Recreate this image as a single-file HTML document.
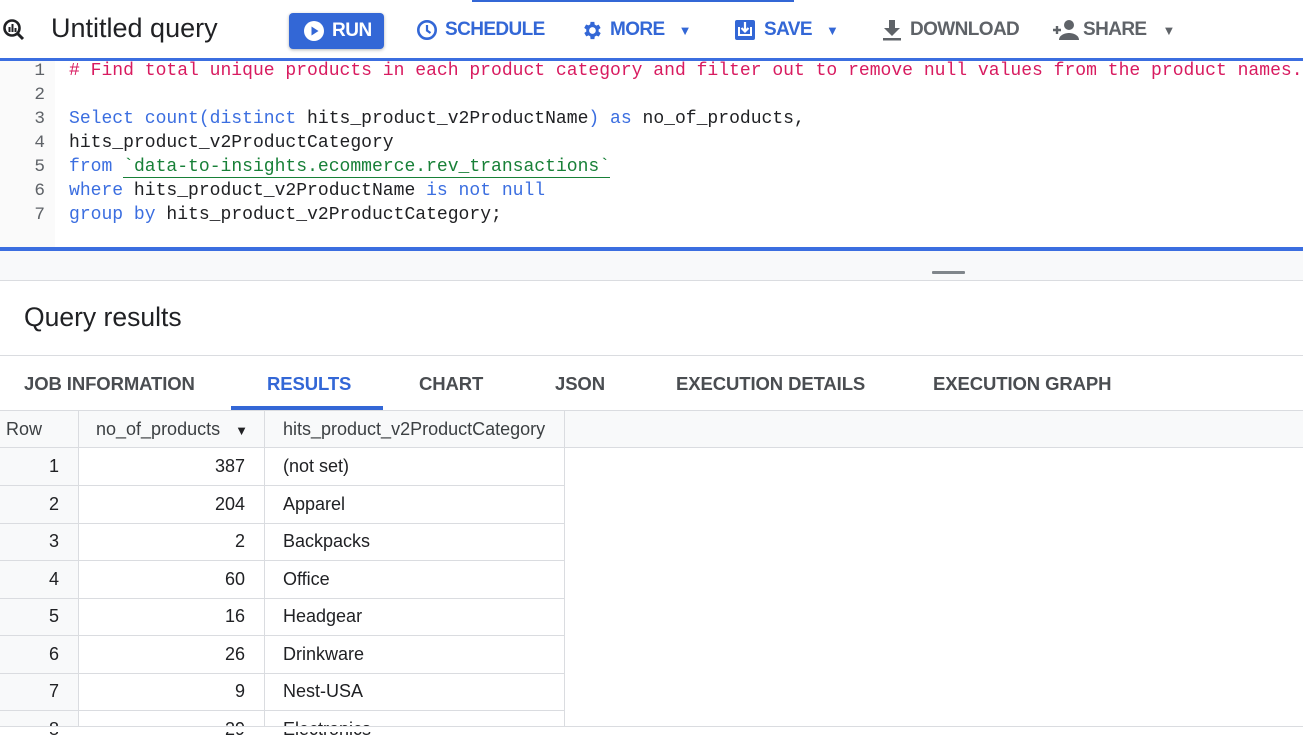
<!DOCTYPE html>
<html><head><style>
*{margin:0;padding:0;box-sizing:border-box}
body{width:1303px;height:732px;overflow:hidden;background:#fff;font-family:"Liberation Sans",Arial,sans-serif;position:relative;color:#202124}
.abs{position:absolute}
.tb{position:absolute;top:17px;height:26px;display:flex;align-items:center;font-size:19px;font-weight:bold;letter-spacing:-0.6px}
.blue{color:#3367d6}.gray{color:#5f6368}
.code{position:absolute;left:69px;font-family:"Liberation Mono",monospace;font-size:18.05px;line-height:24px;white-space:pre;color:#202124}
.ln{position:absolute;left:0;width:45px;text-align:right;font-family:"Liberation Mono",monospace;font-size:17.7px;line-height:24px;color:#5f6368}
.k{color:#3b6ee0}.c{color:#d81b60}.s{color:#188038;border-bottom:1.5px solid #188038}
.tab{position:absolute;top:373px;font-size:18.5px;font-weight:bold;color:#4a4d51;letter-spacing:-0.1px}
.row{position:absolute;left:0;width:565px;height:38px;border-bottom:1px solid #dadce0;font-size:18px}
.row div{position:absolute;top:0;height:37px;line-height:37px}
</style></head><body>
<div class="abs" style="left:472px;top:0;width:322px;height:2px;background:#3367d6"></div>
<svg class="abs" style="left:2px;top:18px" width="24" height="24" viewBox="0 0 24 24"><circle cx="10" cy="10" r="7.5" fill="none" stroke="#202124" stroke-width="2.6"/><rect x="6.5" y="9" width="2" height="5" fill="#202124"/><rect x="9.5" y="6" width="2" height="8" fill="#202124"/><rect x="12.5" y="10" width="2" height="4" fill="#202124"/><path d="M15 15l6 6" stroke="#202124" stroke-width="3"/></svg>
<div class="abs" style="left:51px;top:13px;font-size:27px;color:#202124">Untitled query</div>
<div class="abs" style="left:289px;top:13px;width:95px;height:36px;background:#3367d6;border-radius:4px;box-shadow:0 1px 3px rgba(0,0,0,.3)"></div>
<svg class="abs" style="left:303px;top:20px" width="22" height="22" viewBox="0 0 22 22"><circle cx="11" cy="11" r="10" fill="#fff"/><path d="M8.5 6.5v9l7-4.5z" fill="#3367d6"/></svg>
<div class="abs" style="left:332px;top:20px;font-size:19px;font-weight:bold;color:#fff;letter-spacing:-0.5px">RUN</div>
<div class="tb blue" style="left:416px"><svg width="22" height="22" viewBox="0 0 22 22" style="margin-right:7px"><circle cx="11" cy="11" r="8.7" fill="none" stroke="#3367d6" stroke-width="2.6"/><path d="M11 6v5.5l3.5 2.5" fill="none" stroke="#3367d6" stroke-width="2.2"/></svg>SCHEDULE</div>
<div class="tb blue" style="left:580px"><svg width="23" height="23" viewBox="0 0 24 24" style="margin-right:7px"><path fill="#3367d6" d="M19.4 13a7.5 7.5 0 000-2l2.1-1.6-2-3.5-2.5 1a7 7 0 00-1.7-1L15 3h-4l-.4 2.7a7 7 0 00-1.7 1l-2.5-1-2 3.5L6.6 11a7.5 7.5 0 000 2l-2.1 1.6 2 3.5 2.5-1a7 7 0 001.7 1L11 21h4l.4-2.7a7 7 0 001.7-1l2.5 1 2-3.5zM13 15.5a3.5 3.5 0 110-7 3.5 3.5 0 010 7z"/></svg>MORE<span style="margin-left:14px;font-size:13px">▼</span></div>
<div class="tb blue" style="left:734px"><svg width="22" height="22" viewBox="0 0 22 22" style="margin-right:8px"><rect x="1" y="1" width="20" height="20" rx="2" fill="#3367d6"/><path d="M5 8v8h12V8" fill="none" stroke="#fff" stroke-width="2"/><path d="M11 3v9M7.5 9l3.5 3.5L14.5 9" fill="none" stroke="#fff" stroke-width="2.2"/></svg>SAVE<span style="margin-left:14px;font-size:13px">▼</span></div>
<div class="tb gray" style="left:882px"><svg width="20" height="22" viewBox="0 0 20 22" style="margin-right:8px"><path d="M7 1h6v8h5l-8 8-8-8h5z" fill="#5f6368"/><rect x="1" y="19" width="18" height="2.5" fill="#5f6368"/></svg>DOWNLOAD</div>
<div class="tb gray" style="left:1053px"><svg width="26" height="22" viewBox="0 0 26 22" style="margin-right:4px"><path d="M4 7v8M0 11h8" stroke="#5f6368" stroke-width="2.4"/><circle cx="16" cy="6" r="5" fill="#5f6368"/><path d="M6 21c0-5 6-7 10-7s10 2 10 7z" fill="#5f6368"/></svg>SHARE<span style="margin-left:16px;font-size:13px">▼</span></div>
<div class="abs" style="left:0;top:58px;width:1303px;height:3px;background:#3b6ee0"></div>
<div class="abs" style="left:0;top:61px;width:55px;height:186px;background:#fafafa"></div>
<div class="ln" style="top:59px">1<br>2<br>3<br>4<br>5<br>6<br>7</div>
<div class="code" style="top:59px"><span class="c"># Find total unique products in each product category and filter out to remove null values from the product names.</span>

<span class="k">Select count(distinct</span> hits_product_v2ProductName<span class="k">) as</span> no_of_products,
hits_product_v2ProductCategory
<span class="k">from</span> <span class="s">`data-to-insights.ecommerce.rev_transactions`</span>
<span class="k">where</span> hits_product_v2ProductName <span class="k">is not null</span>
<span class="k">group by</span> hits_product_v2ProductCategory;</div>
<div class="abs" style="left:0;top:247px;width:1303px;height:4px;background:#3b6ee0"></div>
<div class="abs" style="left:0;top:251px;width:1303px;height:30px;background:#f8f9fa;border-bottom:1px solid #dadce0"></div>
<div class="abs" style="left:932px;top:271px;width:33px;height:3px;background:#80868b;border-radius:1px"></div>
<div class="abs" style="left:24px;top:302px;font-size:26.5px;color:#202124">Query results</div>
<div class="abs" style="left:0;top:355px;width:1303px;height:1px;background:#dadce0"></div>
<div class="tab" style="left:24px">JOB INFORMATION</div>
<div class="tab" style="left:267px;color:#3367d6">RESULTS</div>
<div class="tab" style="left:419px">CHART</div>
<div class="tab" style="left:555px">JSON</div>
<div class="tab" style="left:676px">EXECUTION DETAILS</div>
<div class="tab" style="left:933px">EXECUTION GRAPH</div>
<div class="abs" style="left:231px;top:406px;width:152px;height:4px;background:#3367d6"></div>
<div class="abs" style="left:0;top:410px;width:1303px;height:38px;background:#f8f9fa;border-top:1px solid #dadce0;border-bottom:1px solid #dadce0"></div>
<div class="abs" style="left:78px;top:410px;width:1px;height:316px;background:#dadce0"></div>
<div class="abs" style="left:264px;top:410px;width:1px;height:316px;background:#dadce0"></div>
<div class="abs" style="left:564px;top:410px;width:1px;height:316px;background:#dadce0"></div>
<div class="abs" style="left:0;top:448px;width:78px;height:278px;background:#f8f9fa"></div>
<div class="abs" style="left:6px;top:419px;font-size:18px;color:#3c4043">Row</div>
<div class="abs" style="left:96px;top:419px;font-size:18px;color:#3c4043">no_of_products <span style="font-size:13px;margin-left:10px;color:#202124">▼</span></div>
<div class="abs" style="left:283px;top:419px;font-size:18px;color:#3c4043">hits_product_v2ProductCategory</div>
<div class="row" style="top:448px"><div style="left:0;width:59px;text-align:right">1</div><div style="left:79px;width:166px;text-align:right">387</div><div style="left:283px">(not set)</div></div>
<div class="row" style="top:485.5px"><div style="left:0;width:59px;text-align:right">2</div><div style="left:79px;width:166px;text-align:right">204</div><div style="left:283px">Apparel</div></div>
<div class="row" style="top:523px"><div style="left:0;width:59px;text-align:right">3</div><div style="left:79px;width:166px;text-align:right">2</div><div style="left:283px">Backpacks</div></div>
<div class="row" style="top:560.5px"><div style="left:0;width:59px;text-align:right">4</div><div style="left:79px;width:166px;text-align:right">60</div><div style="left:283px">Office</div></div>
<div class="row" style="top:598px"><div style="left:0;width:59px;text-align:right">5</div><div style="left:79px;width:166px;text-align:right">16</div><div style="left:283px">Headgear</div></div>
<div class="row" style="top:635.5px"><div style="left:0;width:59px;text-align:right">6</div><div style="left:79px;width:166px;text-align:right">26</div><div style="left:283px">Drinkware</div></div>
<div class="row" style="top:673px"><div style="left:0;width:59px;text-align:right">7</div><div style="left:79px;width:166px;text-align:right">9</div><div style="left:283px">Nest-USA</div></div>
<div class="row" style="top:710.5px;border:none"><div style="left:0;width:59px;text-align:right">8</div><div style="left:79px;width:166px;text-align:right">29</div><div style="left:283px">Electronics</div></div>
<div class="abs" style="left:0;top:726px;width:1303px;height:6px;background:#fff;border-top:1px solid #dadce0"></div>
</body></html>
